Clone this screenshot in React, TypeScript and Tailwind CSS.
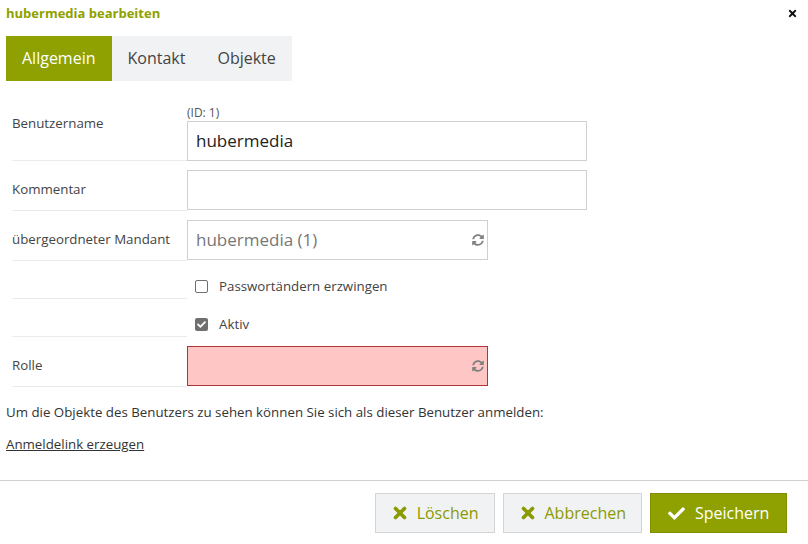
import { FaTimes, FaCheck, FaSyncAlt } from 'react-icons/fa'

const font = { fontFamily: '"Open Sans", "Noto Sans", sans-serif' }

function Checkbox({ checked }: { checked?: boolean }) {
  return checked ? (
    <div className="w-[13px] h-[13px] rounded-[2px] bg-[#6f6f6f] flex items-center justify-center">
      <FaCheck size={9} color="#fff" />
    </div>
  ) : (
    <div className="w-[13px] h-[13px] rounded-[2px] border border-[#6f6f6f] bg-white" />
  )
}

function XIcon() {
  return (
    <svg width="14" height="14" viewBox="0 0 14 14">
      <path d="M2.5 2.5 L11.5 11.5 M11.5 2.5 L2.5 11.5" stroke="currentColor" strokeWidth="3.6" strokeLinecap="round" />
    </svg>
  )
}

function Button({ label, primary }: { label: string; primary?: boolean }) {
  return (
    <button
      className={`h-[40px] flex items-center gap-[10px] pl-[17px] pr-[15px] text-[16px] border ${
        primary
          ? 'bg-[#8fa100] border-[#7f8f00] text-white w-[137px]'
          : 'bg-[#f1f2f4] border-[#d4d4d4] text-[#8a9a00]'
      }`}
    >
      {primary ? <FaCheck size={17} /> : <XIcon />}
      <span>{label}</span>
    </button>
  )
}

export default function App() {
  return (
    <div className="w-[808px] h-[544px] bg-white text-[#444] flex flex-col" style={font}>
      {/* Header */}
      <div className="h-[27px] flex items-center justify-between pl-[6px] pr-[10px]">
        <span className="text-[13px] font-bold text-[#8fa100]">hubermedia bearbeiten</span>
        <FaTimes size={11} color="#111" />
      </div>

      {/* Tabs */}
      <div className="mt-[9px] ml-[6px] flex self-start bg-[#f1f2f4] h-[45px] text-[16px]">
        <div className="px-4 pb-[1px] flex items-center bg-[#8fa100] text-white">Allgemein</div>
        <div className="px-4 pb-[1px] flex items-center text-[#444]">Kontakt</div>
        <div className="px-4 pb-[1px] flex items-center text-[#444]">Objekte</div>
      </div>

      {/* Form */}
      <div className="pt-[20px] pl-[12px] text-[13.3px]">
        <div className="flex">
          <div className="w-[175px] h-[60px] border-b border-[#ebebeb] pt-[13px] leading-[18px]">Benutzername</div>
          <div className="pt-[4px]">
            <div className="text-[12px] leading-[16px] text-[#555]">(ID: 1)</div>
            <div className="w-[400px] h-[40px] border border-[#d0d0d0] flex items-center px-[8px] text-[17px] text-[#222]">
              hubermedia
            </div>
          </div>
        </div>

        <div className="flex">
          <div className="w-[175px] h-[50px] border-b border-[#ebebeb] pt-[19px] leading-[18px]">Kommentar</div>
          <div className="pt-[9px]">
            <div className="w-[400px] h-[40px] border border-[#d0d0d0]" />
          </div>
        </div>

        <div className="flex">
          <div className="w-[175px] h-[50px] border-b border-[#ebebeb] pt-[19px] leading-[18px]">
            übergeordneter Mandant
          </div>
          <div className="pt-[9px]">
            <div className="w-[301px] h-[40px] border border-[#d0d0d0] flex items-center justify-between pl-[8px] pr-[3px] text-[17px] text-[#777]">
              <span>hubermedia (1)</span>
              <FaSyncAlt size={12} color="#808080" />
            </div>
          </div>
        </div>

        <div className="flex">
          <div className="w-[175px] h-[38px] border-b border-[#ebebeb]" />
          <div className="self-start flex items-center gap-[11px] pl-[8px] pt-[16px] leading-[18px]">
            <Checkbox />
            <span>Passwortändern erzwingen</span>
          </div>
        </div>

        <div className="flex">
          <div className="w-[175px] h-[38px] border-b border-[#ebebeb]" />
          <div className="self-start flex items-center gap-[11px] pl-[8px] pt-[16px] leading-[18px]">
            <Checkbox checked />
            <span>Aktiv</span>
          </div>
        </div>

        <div className="flex">
          <div className="w-[175px] h-[50px] border-b border-[#ebebeb] pt-[19px] leading-[18px]">Rolle</div>
          <div className="pt-[9px]">
            <div className="w-[301px] h-[40px] border border-[#b0333a] bg-[#ffc6c6] flex items-center justify-end pr-[3px]">
              <FaSyncAlt size={12} color="#808080" />
            </div>
          </div>
        </div>
      </div>

      <p className="mt-[16px] ml-[6px] text-[13.3px] leading-[18px] text-[#333]">
        Um die Objekte des Benutzers zu sehen können Sie sich als dieser Benutzer anmelden:
      </p>
      <a href="#" className="mt-[14px] ml-[6px] self-start text-[13.3px] leading-[18px] text-[#333] underline">
        Anmeldelink erzeugen
      </a>

      {/* Footer */}
      <div className="mt-[27px] border-t border-[#cfcfcf]" />
      <div className="mt-[12px] flex justify-end gap-2 pr-[21px]">
        <Button label="Löschen" />
        <Button label="Abbrechen" />
        <Button label="Speichern" primary />
      </div>
    </div>
  )
}
